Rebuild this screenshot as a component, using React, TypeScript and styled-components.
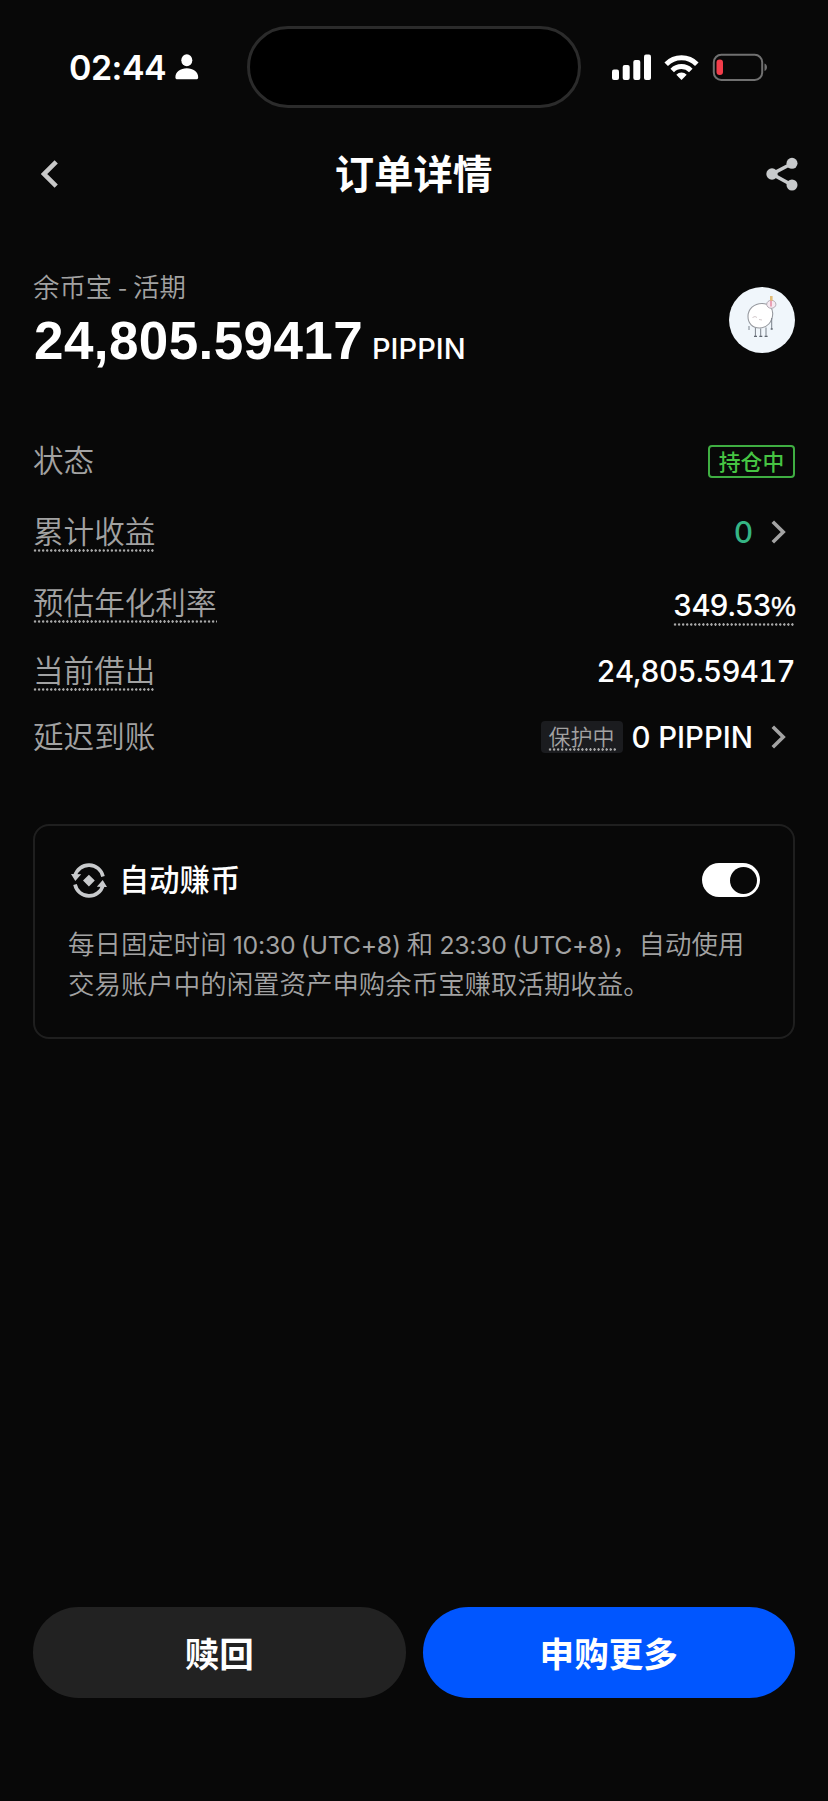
import React from 'react';
import styled, { createGlobalStyle, css } from 'styled-components';

const Global = createGlobalStyle`
  *, *::before, *::after { box-sizing: border-box; }
  body {
    margin: 0;
    background: #080808;
    color: #fff;
    font-family: Inter, 'Noto Sans CJK SC', sans-serif;
    -webkit-font-smoothing: antialiased;
  }
`;

const Screen = styled.div`
  display: flex;
  flex-direction: column;
  width: 828px;
  height: 1801px;
  overflow: hidden;
  background: #080808;
`;

const StatusBar = styled.header`
  display: grid;
  grid-template-columns: 247px 334px 247px;
  height: 134px;
  padding-top: 26px;
`;

const Clock = styled.div`
  display: flex;
  align-items: center;
  gap: 9px;
  height: 82px;
  padding-left: 69px;
  font-size: 34px;
  font-weight: 600;
  letter-spacing: -0.5px;
`;

const Island = styled.div`
  height: 82px;
  border: 3px solid #2b2b2b;
  border-radius: 41px;
  background: #000;
`;

const Indicators = styled.div`
  display: flex;
  align-items: center;
  height: 82px;
  padding-left: 31px;
  svg { display: block; flex: none; }
`;

const NavBar = styled.nav`
  display: grid;
  grid-template-columns: 1fr auto 1fr;
  align-items: center;
  height: 80px;
  padding: 0 30px 0 41px;
`;

const NavButton = styled.button<{ $end?: boolean }>`
  display: flex;
  padding: 0;
  border: 0;
  background: none;
  justify-self: ${(p) => (p.$end ? 'end' : 'start')};
`;

const Title = styled.h1`
  margin: 1px 0 0 -12px;
  font-size: 39.4px;
  line-height: 60px;
  font-weight: 600;
`;

const Main = styled.main`
  display: flex;
  flex-direction: column;
  padding: 52px 33px 0;
`;

const Summary = styled.section`
  display: flex;
  justify-content: space-between;
  height: 160px;
`;

const Product = styled.div`
  height: 44px;
  font-family: 'Noto Sans CJK SC', sans-serif;
  font-size: 26.4px;
  line-height: 40px;
  font-weight: 350;
  color: #a2a2a2;
`;

const Amount = styled.div`
  display: flex;
  align-items: baseline;
  gap: 9px;
  padding-left: 1px;
  line-height: 62px;
`;

const AmountValue = styled.span`
  font-family: 'Liberation Sans', sans-serif;
  font-size: 53px;
  font-weight: 700;
  letter-spacing: 0.4px;
`;

const AmountUnit = styled.span`
  font-size: 29px;
  font-weight: 450;
`;

const Avatar = styled.div`
  width: 66px;
  height: 66px;
  margin-top: 21px;
  border-radius: 50%;
  overflow: hidden;
  background: #f0f6fb;
`;

const Row = styled.div<{ $h: number }>`
  display: flex;
  align-items: center;
  justify-content: space-between;
  height: ${(p) => p.$h}px;
`;

const dotted = css`
  background: radial-gradient(circle, #a8a8a8 1px, transparent 1.4px) 0 100% / 4.06px 3px repeat-x;
`;

const Label = styled.span<{ $dotted?: boolean }>`
  height: 40px;
  font-size: 30.6px;
  line-height: 40.5px;
  font-weight: 350;
  color: #a2a2a2;
  ${(p) => p.$dotted && dotted}
`;

const ValueGroup = styled.div<{ $inset?: boolean }>`
  display: flex;
  align-items: center;
  padding-right: ${(p) => (p.$inset ? 9 : 0)}px;
`;

const Value = styled.span<{ $green?: boolean; $dotted?: boolean; $tabular?: boolean }>`
  height: 40px;
  margin-top: ${(p) => (p.$dotted ? 5 : 0)}px;
  font-size: 29.4px;
  line-height: ${(p) => (p.$dotted ? 39 : 41)}px;
  font-weight: 500;
  color: ${(p) => (p.$green ? '#35b585' : '#fff')};
  ${(p) =>
    p.$tabular &&
    css`
      font-variant-numeric: tabular-nums;
      letter-spacing: ${p.$dotted ? -0.9 : -0.65}px;
    `}
  ${(p) => p.$dotted && dotted}
`;

const Percent = styled.span`
  font-family: 'Liberation Sans', sans-serif;
  font-size: 28px;
  font-weight: 400;
  -webkit-text-stroke: 0.4px #fff;
`;

const ChevronSlot = styled.span`
  display: flex;
  margin-left: 18px;
`;

const StatusTag = styled.span`
  width: 87px;
  height: 33px;
  border: 2px solid #3fae42;
  border-radius: 4px;
  font-size: 21.8px;
  line-height: 30px;
  font-weight: 500;
  text-align: center;
  color: #46c443;
`;

const ShieldTag = styled.span`
  height: 32px;
  margin-right: 8px;
  padding: 0 7px;
  border-radius: 4px;
  background: #1b1c1f;
`;

const ShieldText = styled.span`
  display: block;
  width: 68px;
  height: 30px;
  font-size: 22px;
  line-height: 32px;
  font-weight: 350;
  color: #a2a2a2;
  ${dotted}
`;

const Card = styled.section`
  height: 215px;
  margin-top: 54px;
  padding: 34px 33px 0;
  border: 2px solid #1f1f1f;
  border-radius: 16px;
`;

const CardHead = styled.div`
  display: flex;
  align-items: center;
  height: 40px;
  padding-left: 3px;
`;

const CardTitle = styled.h2`
  flex: 1;
  margin: 0 0 0 12px;
  font-size: 30.3px;
  line-height: 40px;
  font-weight: 500;
`;

const Switch = styled.button`
  display: flex;
  align-items: center;
  justify-content: flex-end;
  width: 58px;
  height: 34px;
  padding: 0 3px;
  border: 0;
  border-radius: 17px;
  background: #fff;
`;

const Knob = styled.span`
  width: 27px;
  height: 27px;
  border-radius: 50%;
  background: #080808;
`;

const CardText = styled.p`
  margin: 25px 0 0;
  font-size: 26.45px;
  line-height: 39px;
  font-weight: 350;
  word-spacing: -1.3px;
  white-space: nowrap;
  color: #a2a2a2;
`;

const Time = styled.span`
  font-size: 24.8px;
  font-weight: 380;
  letter-spacing: -0.25px;
`;

const Actions = styled.footer`
  display: flex;
  gap: 17px;
  margin-top: auto;
  padding: 0 33px 103px;
`;

const ActionButton = styled.button<{ $primary?: boolean }>`
  flex: 1;
  height: 91px;
  padding: 0 0 2px;
  border: 0;
  border-radius: 46px;
  background: ${(p) => (p.$primary ? '#0056ff' : '#222')};
  color: #fff;
  font-family: inherit;
  font-size: 34.6px;
  font-weight: 600;
`;

const Chevron = () => (
  <ChevronSlot>
    <svg width="15" height="24" viewBox="0 0 15 24" fill="none">
      <path d="M1.8 1.8 12.2 12 1.8 22.2" stroke="#a3a3a3" strokeWidth="3.6" />
    </svg>
  </ChevronSlot>
);

export default function App() {
  return (
    <>
      <Global />
      <Screen>
        <StatusBar>
          <Clock>
            02:44
            <svg width="24" height="26" viewBox="0 0 24 26" fill="#fff">
              <ellipse cx="11.8" cy="6.3" rx="5.5" ry="6" />
              <path d="M.4 23.2C.4 18 5.4 14.3 11.8 14.3s11.4 3.7 11.4 8.9c0 1.5-.7 2-2 2H2.4c-1.3 0-2-.5-2-2z" />
            </svg>
          </Clock>
          <Island />
          <Indicators>
            <svg width="158" height="28" viewBox="612 53 158 28">
              <g fill="#fff">
                <rect x="612" y="69.5" width="7" height="10.5" rx="2" />
                <rect x="622.7" y="65" width="7" height="15" rx="2" />
                <rect x="633.3" y="60" width="7" height="20" rx="2" />
                <rect x="644" y="54.5" width="7" height="25.5" rx="2" />
              </g>
              <g fill="none" stroke="#fff" strokeWidth="5">
                <path d="M666.2 64.2a21.5 21.5 0 0 1 30.6 0" />
                <path d="M672.2 70.4a13.2 13.2 0 0 1 18.6 0" />
              </g>
              <path d="M681.5 80l-5.2-5.3a7.5 7.5 0 0 1 10.4 0z" fill="#fff" />
              <rect x="713.8" y="54.8" width="48.4" height="25.2" rx="7.5" fill="none" stroke="#707070" strokeWidth="2" />
              <path d="M764.5 63.5c3.3 1 3.3 6.5 0 7.5z" fill="#707070" />
              <rect x="716.5" y="59.5" width="6.5" height="15.5" rx="3" fill="#f23d4a" />
            </svg>
          </Indicators>
        </StatusBar>

        <NavBar>
          <NavButton aria-label="返回">
            <svg width="18" height="28" viewBox="0 0 18 28" fill="none">
              <path d="M15.2 1.8 2.9 14l12.3 12.2" stroke="#c8c8c8" strokeWidth="4.6" />
            </svg>
          </NavButton>
          <Title>订单详情</Title>
          <NavButton $end aria-label="分享">
            <svg width="32" height="34" viewBox="0 0 32 34">
              <path d="M26 6.5 6 17l20 11" fill="none" stroke="#c8cacc" strokeWidth="3.6" />
              <g fill="#c8cacc">
                <circle cx="26" cy="6.3" r="5.5" />
                <circle cx="6" cy="17" r="5.7" />
                <circle cx="26" cy="28" r="5.5" />
              </g>
            </svg>
          </NavButton>
        </NavBar>

        <Main>
          <Summary>
            <div>
              <Product>余币宝 - 活期</Product>
              <Amount>
                <AmountValue>24,805.59417</AmountValue>
                <AmountUnit>PIPPIN</AmountUnit>
              </Amount>
            </div>
            <Avatar>
              <svg width="66" height="66" viewBox="0 0 66 66" fill="none">
                <path d="M19 29.5C19 22 25 16.5 33 16.5c7 0 11 4.5 10.7 10.5C43.4 35 38 41 30.5 41 23.5 41 19 36.5 19 29.5z" fill="#fff" stroke="#96999f" strokeWidth="1.1" />
                <ellipse cx="42.3" cy="17.3" rx="4.6" ry="4" fill="#f6e9f1" stroke="#a9a4ac" strokeWidth=".9" />
                <path d="M42.3 9v5" stroke="#e2bd78" strokeWidth="2.6" />
                <path d="M42 13.5v6" stroke="#e78fa8" strokeWidth="1.6" />
                <path d="M26.4 41v8M31.7 41.5V49M37 40.5V49M42.7 31v11M20 39v4" stroke="#7b828b" strokeWidth="1" />
                <path d="M25 49.3h3M30.3 49.3h3M35.6 49.3h3M41.7 42h2" stroke="#5f666f" strokeWidth="1.3" />
                <path d="M23.5 30.5l2.5-1 2 1M30 32.5l3 .5" stroke="#d3c9cb" strokeWidth="1" />
              </svg>
            </Avatar>
          </Summary>

          <Row $h={70}>
            <Label>状态</Label>
            <StatusTag>持仓中</StatusTag>
          </Row>
          <Row $h={72}>
            <Label $dotted>累计收益</Label>
            <ValueGroup $inset>
              <Value $green>0</Value>
              <Chevron />
            </ValueGroup>
          </Row>
          <Row $h={70}>
            <Label $dotted>预估年化利率</Label>
            <Value $dotted $tabular>
              349.53<Percent>%</Percent>
            </Value>
          </Row>
          <Row $h={66}>
            <Label $dotted>当前借出</Label>
            <Value $tabular>24,805.59417</Value>
          </Row>
          <Row $h={66}>
            <Label>延迟到账</Label>
            <ValueGroup $inset>
              <ShieldTag>
                <ShieldText>保护中</ShieldText>
              </ShieldTag>
              <Value>0 PIPPIN</Value>
              <Chevron />
            </ValueGroup>
          </Row>

          <Card>
            <CardHead>
              <svg width="36" height="36" viewBox="0 -1 36 36">
                <g fill="none" stroke="#c8cacc" strokeWidth="3.6">
                  <path d="M4 12.8A14.4 14.4 0 0 1 32 13.5" />
                  <path d="M32 22.2A14.4 14.4 0 0 1 4 21.5" />
                </g>
                <path d="M0 11l10.2.3-5.9 6.7zM36 24l-10.2-.3 5.9-6.7zM17.9 11.7l5.9 5.9-5.9 5.9-5.9-5.9z" fill="#c8cacc" />
              </svg>
              <CardTitle>自动赚币</CardTitle>
              <Switch role="switch" aria-checked="true" aria-label="自动赚币">
                <Knob />
              </Switch>
            </CardHead>
            <CardText>
              每日固定时间 <Time>10:30 (UTC+8)</Time> 和 <Time>23:30 (UTC+8)</Time>，自动使用
              <br />
              交易账户中的闲置资产申购余币宝赚取活期收益。
            </CardText>
          </Card>
        </Main>

        <Actions>
          <ActionButton>赎回</ActionButton>
          <ActionButton $primary>申购更多</ActionButton>
        </Actions>
      </Screen>
    </>
  );
}
